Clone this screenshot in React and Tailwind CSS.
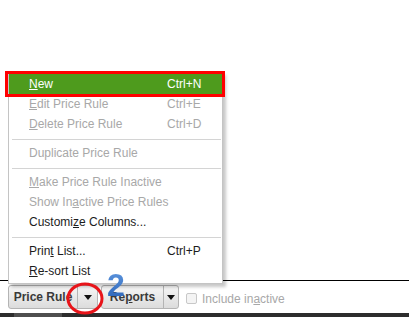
import React from "react";

const items = [
  { label: ["", "N", "ew"], key: "Ctrl+N", active: true },
  { label: ["", "E", "dit Price Rule"], key: "Ctrl+E", disabled: true },
  { label: ["", "D", "elete Price Rule"], key: "Ctrl+D", disabled: true },
  { sep: true },
  { label: ["Duplicate Price Rule", "", ""], disabled: true },
  { sep: true },
  { label: ["", "M", "ake Price Rule Inactive"], disabled: true },
  { label: ["Show In", "a", "ctive Price Rules"], disabled: true },
  { label: ["Customi", "z", "e Columns..."] },
  { sep: true },
  { label: ["Prin", "t", " List..."], key: "Ctrl+P" },
  { label: ["", "R", "e-sort List"] },
];

function MenuRow({ item }) {
  const [pre, u, post] = item.label;
  let color = "text-[#1c1c1c]";
  if (item.disabled) color = "text-[#a8a8a8]";
  if (item.active) color = "text-white bg-[#4e9b1d]";
  return (
    <div className={`h-[20px] flex items-center pl-[20px] text-[12px] whitespace-nowrap ${color}`}>
      <span className="flex-1">
        {pre}
        {u && <u>{u}</u>}
        {post}
      </span>
      <span className="w-[55px]">{item.key}</span>
    </div>
  );
}

function Arrow() {
  return (
    <svg width="8" height="5" viewBox="0 0 8 5">
      <polygon points="0,0 8,0 4,5" fill="#111" />
    </svg>
  );
}

export default function App() {
  return (
    <div className="relative w-[409px] h-[317px] bg-white flex flex-col overflow-hidden font-['Liberation_Sans',Arial,sans-serif]">
      <div className="flex-1" />
      <div className="h-px bg-black" />

      {/* toolbar */}
      <div className="h-[32px] flex items-center pl-[8px]">
        <div className="flex h-[24px] rounded-[3px] border border-[#b4b4b4] bg-gradient-to-b from-[#f6f6f6] to-[#dcdcdc]">
          <div className="w-[68px] flex items-center justify-center text-[12px] font-bold text-[#3a3a3a]">
            Price Rule
          </div>
          <div className="w-[20px] flex items-center justify-center border-l border-[#b4b4b4]">
            <Arrow />
          </div>
        </div>
        <div className="ml-[3px] flex h-[24px] rounded-[3px] border border-[#b4b4b4] bg-gradient-to-b from-[#f6f6f6] to-[#dcdcdc]">
          <div className="w-[61px] flex items-center justify-center text-[12px] font-bold text-[#3a3a3a]">
            <span>
              Re<u>p</u>orts
            </span>
          </div>
          <div className="w-[15px] flex items-center justify-center border-l border-[#b4b4b4]">
            <Arrow />
          </div>
        </div>
        <div className="ml-[7px] w-[11px] h-[11px] rounded-[2px] border border-[#c8c8c8] bg-[#f4f4f4] mt-[2px]" />
        <div className="ml-[5px] mt-[3px] text-[12px] text-[#a8a8a8]">
          Include in<u>a</u>ctive
        </div>
      </div>

      <div className="h-[4px] bg-[#2d2d2d] flex">
        <div className="ml-[14px] w-[48px] bg-[#4f4f4f]" />
      </div>

      {/* dropdown menu */}
      <div className="absolute left-[8px] top-[72px] w-[215px] bg-white border border-[#c4c4c4] pt-[1px] pb-[2px] shadow-[3px_3px_3px_rgba(0,0,0,0.22)]">
        {items.map((item, i) =>
          item.sep ? (
            <div key={i} className="h-px bg-[#d4d4d4] mt-[5px] mb-[3px] ml-[3px] mr-px" />
          ) : (
            <MenuRow key={i} item={item} />
          )
        )}
      </div>

      {/* annotations */}
      <div className="absolute left-[5px] top-[71px] w-[220px] h-[26px] border-[3px] border-[#f00] pointer-events-none" />
      <svg className="absolute left-[66px] top-[282px]" width="38" height="33" viewBox="0 0 38 33">
        <ellipse cx="19" cy="16.5" rx="17" ry="14.5" fill="none" stroke="#e8141a" strokeWidth="3" />
      </svg>
      <div className="absolute left-[107px] top-[269px] text-[32px] leading-none font-bold bg-gradient-to-b from-[#5f98e0] to-[#2a62b6] bg-clip-text text-transparent">
        2
      </div>
    </div>
  );
}
